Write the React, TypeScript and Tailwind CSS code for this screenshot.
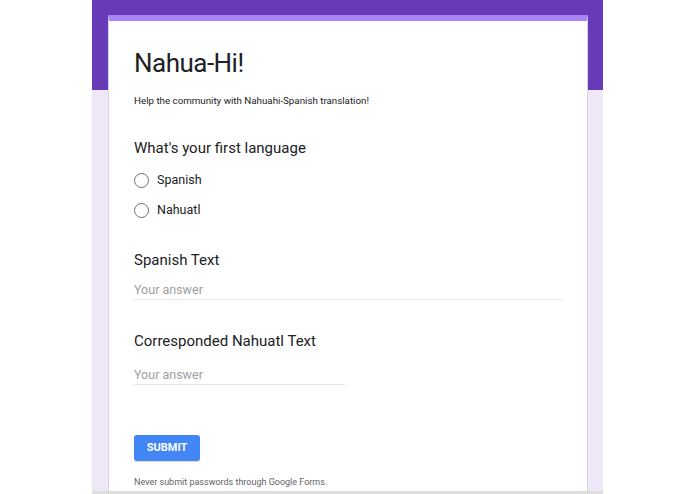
import React from "react"

const options = ["Spanish", "Nahuatl"]

function Radio({ label }: { label: string }) {
  return (
    <label className="flex h-[30px] items-center gap-[8px]">
      <span className="h-[15px] w-[15px] rounded-full border-[1.5px] border-[#707070]" />
      <span className="text-[12.5px] leading-[18px] text-[#202124]">{label}</span>
    </label>
  )
}

function AnswerField({ width }: { width: string }) {
  return (
    <div
      className={`${width} border-b border-[#e4e4e4] text-[12.5px] leading-[18px] text-[#9e9e9e]`}
    >
      Your answer
    </div>
  )
}

export default function App() {
  return (
    <div
      className="flex h-[494px] w-full justify-center bg-white"
      style={{ fontFamily: "Roboto, 'Liberation Sans', sans-serif" }}
    >
      <div className="flex h-full w-[511px] flex-col overflow-hidden">
        <div className="flex min-h-0 flex-1 flex-col bg-[linear-gradient(to_bottom,#673ab7_90px,#ede7f6_90px)] pl-[16px] pr-[15px] pt-[15px]">
          <div className="flex-1 border-x border-[#d9d5e2] border-t-[6px] border-t-[#a886f7] bg-white pl-[25px] pr-[25px] pt-[26px]">
            {/* form header */}
            <h1 className="text-[26px] leading-[32px] tracking-[-0.02em] text-[#202124]">
              Nahua-Hi!
            </h1>
            <p className="mt-[15px] text-[9.75px] leading-[14px] text-[#202124]">
              Help the community with Nahuahi-Spanish translation!
            </p>

            {/* first question */}
            <h2 className="mt-[30px] text-[15px] leading-[20px] text-[#202124]">
              What's your first language
            </h2>
            <div className="mt-[7px] flex flex-col">
              {options.map((o) => (
                <Radio key={o} label={o} />
              ))}
            </div>

            <h2 className="mt-[25px] text-[15px] leading-[20px] text-[#202124]">
              Spanish Text
            </h2>
            <div className="mt-[11px]">
              <AnswerField width="w-full" />
            </div>

            <h2 className="mt-[31px] text-[15px] leading-[20px] text-[#202124]">
              Corresponded Nahuatl Text
            </h2>
            <div className="mt-[15px]">
              <AnswerField width="w-[211px]" />
            </div>

            <button className="mt-[50px] flex h-[26px] w-[66px] items-center justify-center rounded-[3px] bg-[#4285f4] text-[11px] font-bold text-white shadow-[0_1px_1px_rgba(0,0,0,0.15)]">
              SUBMIT
            </button>
            <p className="mt-[15px] text-[9px] leading-[12px] text-[#5f6368]">
              Never submit passwords through Google Forms.
            </p>
          </div>
        </div>
        <div className="h-[3px] bg-[#dedede]" />
      </div>
    </div>
  )
}
